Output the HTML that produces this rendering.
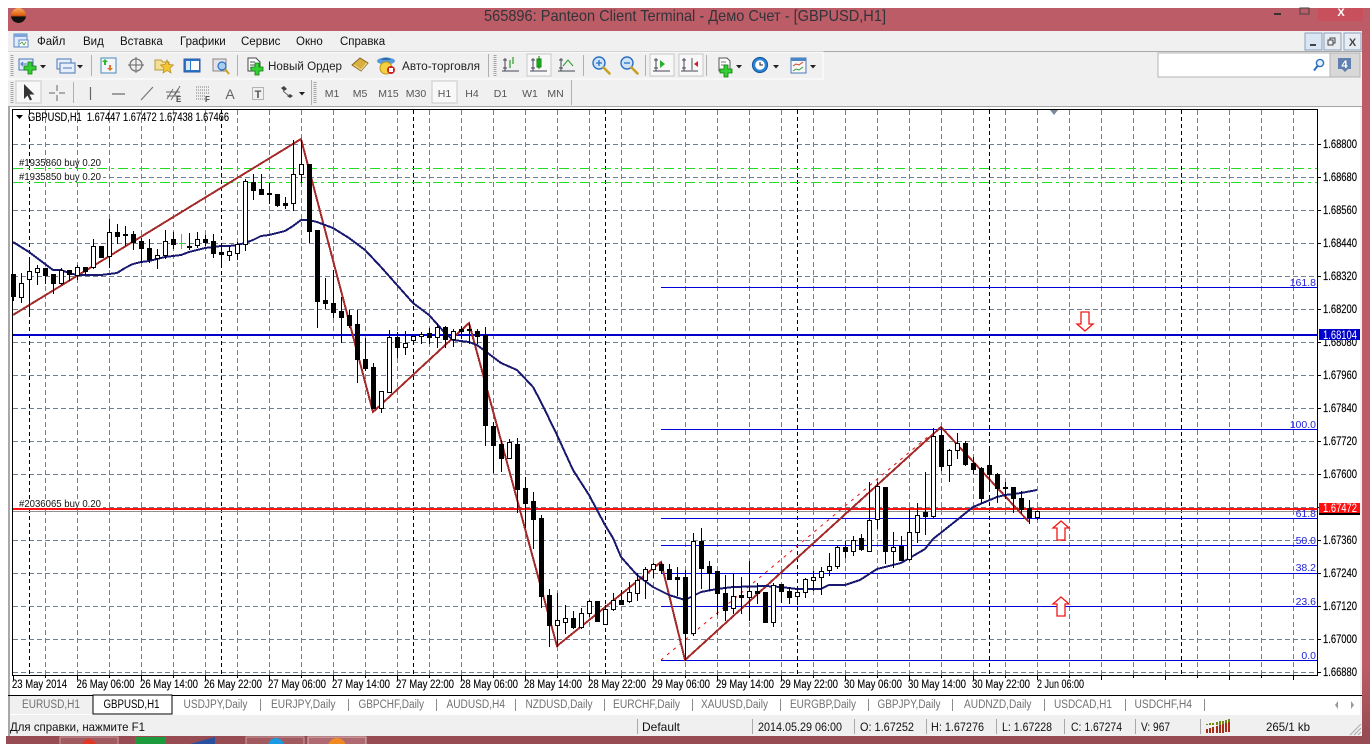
<!DOCTYPE html>
<html><head><meta charset="utf-8"><title>Panteon Client Terminal</title>
<style>
html,body{margin:0;padding:0;background:#fff;width:1370px;height:744px;overflow:hidden}
svg{display:block;font-family:"Liberation Sans","Noto Sans CJK SC",sans-serif}
text{white-space:pre}
.m{font-size:11.5px;fill:#111}
.tf{font-size:10.5px;fill:#555;text-anchor:middle}
.ax{font-size:11.5px;fill:#000;stroke:#000;stroke-width:.15px}
.dt{font-size:11.5px;fill:#000;stroke:#000;stroke-width:.12px}
.tb{font-size:11.5px;fill:#707070}
.st{font-size:12px;fill:#111}
.fb{font-size:10.5px;fill:#2222dd;text-anchor:end}
.or{font-size:10.5px;fill:#111}
.c{shape-rendering:crispEdges}
</style></head><body>
<svg width="1370" height="744" viewBox="0 0 1370 744" xmlns="http://www.w3.org/2000/svg">
<defs>
<linearGradient id="rs" x1="0" y1="0" x2="0" y2="1"><stop offset="0" stop-color="#bc5c66"/><stop offset=".9" stop-color="#bc5c66"/><stop offset="1" stop-color="#974b52"/></linearGradient>
<linearGradient id="ball" x1="0" y1="0" x2="0" y2="1"><stop offset="0" stop-color="#f6b060"/><stop offset=".5" stop-color="#e05a10"/><stop offset=".6" stop-color="#111"/><stop offset="1" stop-color="#111"/></linearGradient>
<g id="pl"><path d="M-2-6h4v4h4v4h-4v4h-4v-4h-4v-4h4z" fill="#35d035" stroke="#0c7c0c" stroke-width=".8"/></g>
<path id="dd" d="M0 0h6l-3 3.5z" fill="#222"/>
<g id="lens"><circle cx="0" cy="0" r="6" fill="#cfe3fa" stroke="#2a6fc0" stroke-width="1.4"/><path d="M4.5 4.5l6 6" stroke="#c9a020" stroke-width="2.6" stroke-linecap="round"/></g>
<g id="axes"><path d="M-6-7v13M-9 6H8M-8-5h4M-8 3h4" stroke="#445" stroke-width="1" fill="none"/></g>
</defs>

<rect x="8" y="8" width="1362" height="23" fill="#bc5c66"/>
<rect x="1362" y="31" width="8" height="705" fill="url(#rs)"/>
<rect x="6" y="736" width="1364" height="8" fill="#974b52"/>
<rect x="8" y="31" width="1354" height="705" fill="#f0f0f0"/>

<!-- title bar -->
<circle cx="18.5" cy="15.5" r="7.5" fill="url(#ball)"/>
<text x="484" y="21" font-size="16" fill="#33333a" textLength="402" lengthAdjust="spacingAndGlyphs">565896: Panteon Client Terminal - Демо Счет - [GBPUSD,H1]</text>
<rect x="1274" y="13" width="7" height="2" fill="#333"/>
<rect x="1300" y="8" width="9" height="6" fill="none" stroke="#444"/>
<rect x="1318" y="8" width="45" height="13" fill="#c8505c"/>
<text x="1341" y="16" font-size="11" font-weight="bold" fill="#fff" text-anchor="middle">X</text>

<!-- menu bar -->
<g class="c"><rect x="14" y="34" width="13" height="13" fill="#dfeafa" stroke="#5a86c6"/><rect x="14" y="34" width="13" height="3" fill="#7ea4dc"/><rect x="19" y="40" width="9" height="7" fill="#fff" stroke="#5a86c6"/></g>
<path d="M20 44l2-2 2 3 2-3" fill="none" stroke="#3a9a3a" stroke-width=".8"/>
<text class="m" x="37" y="45">Файл</text>
<text class="m" x="83" y="45">Вид</text>
<text class="m" x="120" y="45">Вставка</text>
<text class="m" x="180" y="45">Графики</text>
<text class="m" x="241" y="45">Сервис</text>
<text class="m" x="296" y="45">Окно</text>
<text class="m" x="340" y="45">Справка</text>
<g class="c">
<rect x="1305" y="33" width="17" height="17" fill="#dbe6f4" stroke="#8aa0bc"/><rect x="1310" y="44" width="6" height="2" fill="#444"/>
<rect x="1324" y="33" width="17" height="17" fill="#e8edf3" stroke="#8aa0bc"/><rect x="1330" y="38" width="5" height="5" fill="none" stroke="#444"/><rect x="1328" y="40" width="5" height="5" fill="#e8edf3" stroke="#444"/>
<rect x="1344" y="33" width="17" height="17" fill="#e8edf3" stroke="#8aa0bc"/>
</g>
<text x="1352.5" y="46" font-size="11" font-weight="bold" fill="#444" text-anchor="middle">X</text>
<rect class="c" x="8" y="51" width="1354" height="1" fill="#a8a8a8"/>

<!-- toolbars bg -->
<rect class="c" x="8" y="52" width="815" height="27" fill="#f0f0f0" stroke="#fff"/>
<rect class="c" x="1158" y="53" width="172" height="24" fill="#fff" stroke="#b4b4b4"/>
<rect class="c" x="1330" y="53" width="30" height="24" fill="#d8d8d8" stroke="#b4b4b4"/>
<path d="M1338 58h13v11h-3l-3 3-3-3h-4z" fill="#6080b0"/>
<text x="1344.5" y="68" font-size="11" font-weight="bold" fill="#fff" text-anchor="middle">4</text>
<circle cx="1320" cy="63" r="3.6" fill="#e8f2ff" stroke="#2a6fc0" stroke-width="1.4"/><path d="M1317.5 66l-3.5 4.5" stroke="#2a6fc0" stroke-width="2"/>
<path d="M12 55v22M12 82v21M495 55v22M315 82v21" stroke="#a4a4a4" stroke-width="3" stroke-dasharray="1 1"/>
<g class="c" fill="#b0b0b0">
<rect x="91" y="55" width="1" height="21"/><rect x="237" y="55" width="1" height="21"/><rect x="488" y="54" width="1" height="23"/><rect x="583" y="55" width="1" height="21"/><rect x="645" y="55" width="1" height="21"/><rect x="706" y="55" width="1" height="21"/>
<rect x="73" y="82" width="1" height="21"/><rect x="311" y="80" width="1" height="25"/><rect x="571" y="80" width="1" height="25"/>
</g>

<!-- Toolbar 1 icons -->
<rect class="c" x="19" y="59" width="14" height="11" fill="#dfeafa" stroke="#4a76b6"/><path d="M21 64h6M23 62l-2 2 2 2M27 66h4" stroke="#4a76b6" fill="none"/><use href="#pl" x="30" y="68"/>
<use href="#dd" x="40" y="65"/>
<rect class="c" x="57" y="59" width="14" height="10" fill="#e6effb" stroke="#4a76b6"/><rect class="c" x="60" y="63" width="15" height="10" fill="#e6effb" stroke="#4a76b6"/><path d="M63 68h9" stroke="#4a76b6"/>
<use href="#dd" x="77" y="65"/>
<rect class="c" x="101" y="58" width="15" height="15" fill="#f2f6fb" stroke="#4a88bc" stroke-width="1"/><path d="M105 59l3 3h-2v3h-2v-3h-2z" fill="#2eb82e"/><path d="M110 71l-3-3h2v-3h2v3h2z" fill="#e2742a"/>
<circle cx="136" cy="65" r="6" fill="none" stroke="#777" stroke-width="1.3"/><path d="M136 57v16M128 65h16" stroke="#666"/>
<path d="M155 60h6l2 2h6v8h-14z" fill="#f5df95" stroke="#b49a3c"/><path d="M167 60l2 4.500 4.500.5-3.500 3 1 5-4-2.500-4 2.500 1-5-3.500-3 4.500-.5z" fill="#f5c431" stroke="#b48a1c" stroke-width=".7"/>
<rect class="c" x="184" y="59" width="16" height="13" fill="#2a76c8" stroke="#2a5aa8"/><rect class="c" x="186" y="61" width="4" height="9" fill="#dde8f6"/><rect class="c" x="191" y="61" width="8" height="9" fill="#fff"/>
<rect class="c" x="213" y="59" width="13" height="12" fill="#e2e2e8" stroke="#888"/><circle cx="222" cy="66" r="4" fill="#a8cdf0" stroke="#2a6fc0" stroke-width="1.2"/><path d="M225 69l4 5" stroke="#c9a020" stroke-width="2"/>
<path d="M248 58h8l4 4v9h-12z" fill="#fff" stroke="#444"/><path d="M250 62h5M250 65h7M250 68h4" stroke="#555"/><use href="#pl" x="257" y="69"/>
<text x="268" y="70" font-size="11.5" fill="#222" textLength="74" lengthAdjust="spacingAndGlyphs">Новый Ордер</text>
<path d="M352 65l8-7 8 5-7 8z" fill="#d9b040" stroke="#8a6420"/><path d="M354 65l7 5 6-7" fill="none" stroke="#f4e09a"/>
<ellipse cx="386" cy="61" rx="9" ry="3.5" fill="#5a9ad6"/><path d="M381 60q5-5 10 0z" fill="#2a6ab0"/><circle cx="386" cy="68" r="6" fill="#f5d040" stroke="#c09818"/><circle cx="391" cy="70" r="4" fill="#d02020"/><rect class="c" x="389" y="68" width="4" height="4" fill="#fff"/>
<text x="402" y="70" font-size="11.5" fill="#222" textLength="78" lengthAdjust="spacingAndGlyphs">Авто-торговля</text>

<use href="#axes" x="511" y="65"/><path d="M510 60v8M513 57v7" stroke="#2a9a2a" stroke-width="1.2"/>
<rect class="c" x="527" y="54" width="24" height="22" fill="#f8f8f8" stroke="#c8c8c8"/><use href="#axes" x="539" y="65"/><rect class="c" x="537" y="59" width="4" height="8" fill="#2ad02a" stroke="#0c7c0c"/><path d="M539 56v13" stroke="#0c7c0c"/>
<use href="#axes" x="567" y="65"/><path d="M563 66l5-6 5 6" fill="none" stroke="#2a9a2a"/>
<use href="#lens" x="599" y="63"/><path d="M596 63h6M599 60v6" stroke="#2a6fc0" stroke-width="1.3"/>
<use href="#lens" x="627" y="63"/><path d="M624 63h6" stroke="#2a6fc0" stroke-width="1.3"/>
<rect class="c" x="650" y="54" width="24" height="22" fill="#f8f8f8" stroke="#c8c8c8"/><use href="#axes" x="662" y="65"/><path d="M660 60l5 4-5 4z" fill="#2ab02a"/>
<rect class="c" x="679" y="54" width="24" height="22" fill="#f8f8f8" stroke="#c8c8c8"/><use href="#axes" x="690" y="65"/><path d="M692 58v12" stroke="#555"/><path d="M698 61l-4 3 4 3z" fill="#d02020"/>
<path d="M719 58h8l3 3v10h-11z" fill="#fff" stroke="#555"/><path d="M721 62h5M721 65h6" stroke="#777"/><use href="#pl" x="726" y="71"/>
<use href="#dd" x="736" y="65"/>
<circle cx="760" cy="65" r="7.500" fill="#2a86d8" stroke="#1a5aa0" stroke-width="1.2"/><circle cx="760" cy="65" r="4.800" fill="#fff"/><path d="M760 62v3h3" stroke="#222" fill="none"/>
<use href="#dd" x="773" y="65"/>
<rect class="c" x="791" y="58" width="15" height="15" fill="#f8f8f8" stroke="#4a76b6"/><rect class="c" x="791" y="58" width="15" height="3" fill="#4a86c6"/><path d="M793 66l3-2 3 1 4-3" fill="none" stroke="#d04020"/><path d="M793 71l3-2 3 1 4-3" fill="none" stroke="#30a030"/>
<use href="#dd" x="810" y="65"/>

<!-- Toolbar 2 icons -->
<rect class="c" x="16" y="81" width="25" height="22" fill="#f8f8f8" stroke="#c8c8c8"/>
<path d="M24 84v15l3.500-3.500 2.500 5 2-1-2.500-5h5z" fill="#333"/>
<path d="M57 85v6M57 95v6M49 93h6M59 93h6" stroke="#666" stroke-width="1"/>
<path d="M90.500 87v13" stroke="#666" stroke-width="1.2"/>
<path d="M112 94h13" stroke="#666" stroke-width="1.2"/>
<path d="M141 100l12-13" stroke="#777" stroke-width="1.2"/>
<path d="M167 99l6-10M171 100l7-11M166 92h14M167 96h13M175 95l5-9" stroke="#666" stroke-width=".9" fill="none"/>
<text x="176" y="102" font-size="8" font-weight="bold" fill="#444">E</text>
<path d="M196 87h13M196 90h13M196 93h13M196 96h9M196 99h9" stroke="#777" stroke-dasharray="1 1"/>
<text x="205" y="102" font-size="8" font-weight="bold" fill="#444">F</text>
<text x="230" y="99" font-size="14" fill="#666" text-anchor="middle">A</text>
<rect x="252.500" y="87.500" width="11" height="12" fill="none" stroke="#777" stroke-dasharray="1 1"/><text x="258" y="98" font-size="11" font-weight="bold" fill="#555" text-anchor="middle">T</text>
<path d="M281 88l3-2 3 3-3 2zM287 96l3-2 3 2-3 2z" fill="#444"/><path d="M283 91l6 5" stroke="#666"/>
<use href="#dd" x="299" y="92"/>
<rect class="c" x="432" y="81" width="25" height="22" fill="#f8f8f8" stroke="#c8c8c8"/>
<text class="tf" x="332" y="97">M1</text><text class="tf" x="360" y="97">M5</text><text class="tf" x="388.500" y="97">M15</text><text class="tf" x="416" y="97">M30</text><text class="tf" x="444.500" y="97">H1</text><text class="tf" x="472" y="97">H4</text><text class="tf" x="500.500" y="97">D1</text><text class="tf" x="530" y="97">W1</text><text class="tf" x="555.500" y="97">MN</text>
<rect class="c" x="8" y="106" width="1354" height="1" fill="#a4a4a4"/>

<!-- chart -->
<rect class="c" x="10" y="107" width="1350" height="588" fill="#fff"/>
<rect class="c" x="8" y="107" width="2" height="629" fill="#a8a8a8"/>
<g id="grid" class="c" stroke="#708090" stroke-width="1" stroke-dasharray="5 3"></g>
<g id="dates" class="c" stroke="#000" stroke-width="1" stroke-dasharray="4 3"></g>

<!-- green order lines -->
<g class="c" stroke="#22dd22" stroke-width="1" stroke-dasharray="10 4 3 4">
<path d="M13 168.500H1317M13 182.500H1317"/>
</g>
<!-- fibo -->
<g class="c" stroke="#0000d8" stroke-width="1"><path d="M661 287.500H1317M661 429.500H1317M661 518.500H1317M661 545.500H1317M661 573.500H1317M661 606.500H1317M661 660.500H1317"/></g>
<!-- horizontal -->
<rect class="c" x="13" y="334" width="1304" height="2" fill="#0000c8"/>
<rect class="c" x="13" y="511" width="1304" height="1" fill="#909090"/>
<rect class="c" x="13" y="508" width="1304" height="2" fill="#ff1010"/>

<path d="M661 660L930 435" stroke="#e01010" stroke-width="1" stroke-dasharray="3 5" fill="none"/>
<polyline class="c" points="13,315 301,139 373,412 469,323 557,646 661,562 685,660 941,427 1029,522" fill="none" stroke="#a52a2a" stroke-width="2"/>
<polyline class="c" points="13,242 21,247 29,252 37,258 45,264 53,270 61,270 69,273 77,275 85,275 93,275 101,275 109,274 117,273 125,268 133,264 141,262 149,261 157,259 165,257 173,256 181,255 189,252 197,250 205,248 213,247 221,246 229,246 237,245 245,243 253,240 261,236 269,235 277,233 285,231 293,226 301,220 309,220 317,222 325,225 333,228 349,238 365,250 381,267 397,285 413,303 429,315 445,333 453,340 469,342 477,345 493,357 501,363 517,370 533,387 541,402 557,435 573,470 589,495 597,510 605,525 613,538 621,557 637,575 653,587 669,595 685,600 701,592 717,589 733,587 765,586 781,587 797,589 821,589 829,585 845,585 860,580 877,569 901,563 925,549 933,539 957,520 973,507 997,497 1005,495 1021,493 1037,490" fill="none" stroke="#191970" stroke-width="2"/>
<g id="cd" class="c"></g>

<!-- arrows -->
<path d="M1061 521l8 7h-4v12h-8v-12h-4z" fill="#fff" stroke="#f01818" stroke-width="1.300"/>
<path d="M1061 597l8 7h-4v12h-8v-12h-4z" fill="#fff" stroke="#f01818" stroke-width="1.300"/>
<path d="M1085 331l8-7h-4v-12h-8v12h-4z" fill="#fff" stroke="#f01818" stroke-width="1.300"/>

<rect class="c" x="13" y="172" width="90" height="9" fill="#fff"/>
<rect class="c" x="13" y="499" width="90" height="9" fill="#fff"/>
<text class="or" x="19" y="166" textLength="82" lengthAdjust="spacingAndGlyphs">#1935860 buy 0.20</text>
<text class="or" x="19" y="180" textLength="82" lengthAdjust="spacingAndGlyphs">#1935850 buy 0.20</text>
<text class="or" x="19" y="507" textLength="82" lengthAdjust="spacingAndGlyphs">#2036065 buy 0.20</text>
<text class="fb" x="1316" y="286">161.8</text>
<text class="fb" x="1316" y="428">100.0</text>
<text class="fb" x="1316" y="517">61.8</text>
<text class="fb" x="1316" y="544">50.0</text>
<text class="fb" x="1316" y="571">38.2</text>
<text class="fb" x="1316" y="605">23.6</text>
<text class="fb" x="1316" y="659">0.0</text>

<!-- frame -->
<g class="c" fill="#000">
<rect x="12" y="109" width="1306" height="1"/><rect x="12" y="109" width="1" height="567"/><rect x="1317" y="109" width="1" height="567"/><rect x="12" y="675" width="1306" height="1"/>
</g>
<path d="M1050 110h8l-4 5z" fill="#7a8a9a"/>
<path d="M16 115h7l-3.500 4z" fill="#000"/>
<text x="28" y="121" font-size="11.5" fill="#000" stroke="#000" stroke-width=".12" textLength="201" lengthAdjust="spacingAndGlyphs">GBPUSD,H1  1.67447 1.67472 1.67438 1.67466</text>
<g id="ticks" class="c" stroke="#000" stroke-width="1"></g>

<!-- right axis -->
<text class="ax" x="1323" y="148" textLength="34" lengthAdjust="spacingAndGlyphs">1.68800</text>
<text class="ax" x="1323" y="181" textLength="34" lengthAdjust="spacingAndGlyphs">1.68680</text>
<text class="ax" x="1323" y="214" textLength="34" lengthAdjust="spacingAndGlyphs">1.68560</text>
<text class="ax" x="1323" y="247" textLength="34" lengthAdjust="spacingAndGlyphs">1.68440</text>
<text class="ax" x="1323" y="280" textLength="34" lengthAdjust="spacingAndGlyphs">1.68320</text>
<text class="ax" x="1323" y="313" textLength="34" lengthAdjust="spacingAndGlyphs">1.68200</text>
<text class="ax" x="1323" y="346" textLength="34" lengthAdjust="spacingAndGlyphs">1.68080</text>
<text class="ax" x="1323" y="379" textLength="34" lengthAdjust="spacingAndGlyphs">1.67960</text>
<text class="ax" x="1323" y="412" textLength="34" lengthAdjust="spacingAndGlyphs">1.67840</text>
<text class="ax" x="1323" y="445" textLength="34" lengthAdjust="spacingAndGlyphs">1.67720</text>
<text class="ax" x="1323" y="478" textLength="34" lengthAdjust="spacingAndGlyphs">1.67600</text>
<text class="ax" x="1323" y="544" textLength="34" lengthAdjust="spacingAndGlyphs">1.67360</text>
<text class="ax" x="1323" y="577" textLength="34" lengthAdjust="spacingAndGlyphs">1.67240</text>
<text class="ax" x="1323" y="610" textLength="34" lengthAdjust="spacingAndGlyphs">1.67120</text>
<text class="ax" x="1323" y="643" textLength="34" lengthAdjust="spacingAndGlyphs">1.67000</text>
<text class="ax" x="1323" y="676" textLength="34" lengthAdjust="spacingAndGlyphs">1.66880</text>
<rect class="c" x="1319" y="329" width="41" height="11" fill="#0000c8"/>
<text x="1323" y="339" font-size="11.5" fill="#fff" textLength="34" lengthAdjust="spacingAndGlyphs">1.68104</text>
<rect class="c" x="1319" y="503" width="41" height="12" fill="#000"/>
<rect class="c" x="1319" y="503" width="41" height="10" fill="#ff1010"/>
<text x="1323" y="512" font-size="11.5" fill="#fff" textLength="34" lengthAdjust="spacingAndGlyphs">1.67472</text>

<!-- date axis -->
<text class="dt" x="12" y="688" textLength="55" lengthAdjust="spacingAndGlyphs">23 May 2014</text>
<text class="dt" x="76.500" y="688" textLength="58" lengthAdjust="spacingAndGlyphs">26 May 06:00</text>
<text class="dt" x="140" y="688" textLength="58" lengthAdjust="spacingAndGlyphs">26 May 14:00</text>
<text class="dt" x="204" y="688" textLength="58" lengthAdjust="spacingAndGlyphs">26 May 22:00</text>
<text class="dt" x="268" y="688" textLength="58" lengthAdjust="spacingAndGlyphs">27 May 06:00</text>
<text class="dt" x="332" y="688" textLength="58" lengthAdjust="spacingAndGlyphs">27 May 14:00</text>
<text class="dt" x="396" y="688" textLength="58" lengthAdjust="spacingAndGlyphs">27 May 22:00</text>
<text class="dt" x="460" y="688" textLength="58" lengthAdjust="spacingAndGlyphs">28 May 06:00</text>
<text class="dt" x="524" y="688" textLength="58" lengthAdjust="spacingAndGlyphs">28 May 14:00</text>
<text class="dt" x="588" y="688" textLength="58" lengthAdjust="spacingAndGlyphs">28 May 22:00</text>
<text class="dt" x="652" y="688" textLength="58" lengthAdjust="spacingAndGlyphs">29 May 06:00</text>
<text class="dt" x="716" y="688" textLength="58" lengthAdjust="spacingAndGlyphs">29 May 14:00</text>
<text class="dt" x="780" y="688" textLength="58" lengthAdjust="spacingAndGlyphs">29 May 22:00</text>
<text class="dt" x="844" y="688" textLength="58" lengthAdjust="spacingAndGlyphs">30 May 06:00</text>
<text class="dt" x="908" y="688" textLength="58" lengthAdjust="spacingAndGlyphs">30 May 14:00</text>
<text class="dt" x="972" y="688" textLength="58" lengthAdjust="spacingAndGlyphs">30 May 22:00</text>
<text class="dt" x="1037" y="688" textLength="47" lengthAdjust="spacingAndGlyphs">2 Jun 06:00</text>

<!-- tabs -->
<rect class="c" x="8" y="695" width="1354" height="1" fill="#000"/>
<rect class="c" x="10" y="696" width="1350" height="19" fill="#fff"/>
<rect class="c" x="10" y="696" width="83" height="18" fill="#f0f0f0"/>
<rect class="c" x="93" y="695" width="79" height="19" fill="#fff" stroke="#000"/>
<g class="c" fill="#8a8a8a">
<rect x="260" y="699" width="1" height="12"/><rect x="348" y="699" width="1" height="12"/><rect x="436" y="699" width="1" height="12"/><rect x="515" y="699" width="1" height="12"/><rect x="604" y="699" width="1" height="12"/><rect x="692" y="699" width="1" height="12"/><rect x="780" y="699" width="1" height="12"/><rect x="868" y="699" width="1" height="12"/><rect x="952" y="699" width="1" height="12"/><rect x="1044" y="699" width="1" height="12"/><rect x="1125" y="699" width="1" height="12"/><rect x="1204" y="699" width="1" height="12"/>
</g>
<text class="tb" x="22" y="708" textLength="58" lengthAdjust="spacingAndGlyphs">EURUSD,H1</text>
<text class="tb" style="fill:#000" x="103.500" y="708" textLength="56" lengthAdjust="spacingAndGlyphs">GBPUSD,H1</text>
<text class="tb" x="183.500" y="708" textLength="64" lengthAdjust="spacingAndGlyphs">USDJPY,Daily</text>
<text class="tb" x="271" y="708" textLength="64.500" lengthAdjust="spacingAndGlyphs">EURJPY,Daily</text>
<text class="tb" x="358.500" y="708" textLength="65.500" lengthAdjust="spacingAndGlyphs">GBPCHF,Daily</text>
<text class="tb" x="446.500" y="708" textLength="58.500" lengthAdjust="spacingAndGlyphs">AUDUSD,H4</text>
<text class="tb" x="525.500" y="708" textLength="67" lengthAdjust="spacingAndGlyphs">NZDUSD,Daily</text>
<text class="tb" x="613" y="708" textLength="67" lengthAdjust="spacingAndGlyphs">EURCHF,Daily</text>
<text class="tb" x="701" y="708" textLength="67" lengthAdjust="spacingAndGlyphs">XAUUSD,Daily</text>
<text class="tb" x="790" y="708" textLength="66" lengthAdjust="spacingAndGlyphs">EURGBP,Daily</text>
<text class="tb" x="877.500" y="708" textLength="63" lengthAdjust="spacingAndGlyphs">GBPJPY,Daily</text>
<text class="tb" x="964" y="708" textLength="67.500" lengthAdjust="spacingAndGlyphs">AUDNZD,Daily</text>
<text class="tb" x="1054" y="708" textLength="58" lengthAdjust="spacingAndGlyphs">USDCAD,H1</text>
<text class="tb" x="1134.500" y="708" textLength="57.500" lengthAdjust="spacingAndGlyphs">USDCHF,H4</text>
<path d="M1338 701l-3 4 3 4zM1351 701l3 4-3 4z" fill="#999"/>

<!-- status bar -->
<text class="st" x="10" y="731" textLength="135" lengthAdjust="spacingAndGlyphs">Для справки, нажмите F1</text>
<text class="st" x="642" y="731" textLength="38" lengthAdjust="spacingAndGlyphs">Default</text>
<text class="st" x="758" y="731" textLength="84" lengthAdjust="spacingAndGlyphs">2014.05.29 06:00</text>
<text class="st" x="860" y="731" textLength="54" lengthAdjust="spacingAndGlyphs">O: 1.67252</text>
<text class="st" x="931" y="731" textLength="53" lengthAdjust="spacingAndGlyphs">H: 1.67276</text>
<text class="st" x="1002" y="731" textLength="50" lengthAdjust="spacingAndGlyphs">L: 1.67228</text>
<text class="st" x="1071" y="731" textLength="51" lengthAdjust="spacingAndGlyphs">C: 1.67274</text>
<text class="st" x="1141" y="731" textLength="29" lengthAdjust="spacingAndGlyphs">V: 967</text>
<text class="st" x="1266" y="731" textLength="44" lengthAdjust="spacingAndGlyphs">265/1 kb</text>
<g class="c" fill="#a8a8a8">
<rect x="637" y="719" width="1" height="15"/><rect x="752" y="719" width="1" height="15"/><rect x="854" y="719" width="1" height="15"/><rect x="926" y="719" width="1" height="15"/><rect x="996" y="719" width="1" height="15"/><rect x="1064" y="719" width="1" height="15"/><rect x="1135" y="719" width="1" height="15"/><rect x="1200" y="719" width="1" height="15"/>
</g>
<g id="conn" class="c"></g>
<path d="M1350 735l11-11M1354 735l7-7M1358 735l3-3" stroke="#aaa" stroke-width="1"/>

<!-- taskbar peek -->
<g class="c"><rect x="60" y="737" width="58" height="8" fill="#a05a60" stroke="#c8a0a4"/><rect x="135" y="737" width="31" height="8" fill="#1c9a3c"/><rect x="246" y="737" width="58" height="8" fill="#a05a60" stroke="#c8a0a4"/><rect x="308" y="737" width="58" height="8" fill="#ae6a70" stroke="#d8b8bc"/></g>
<circle cx="89" cy="746" r="7" fill="#e03828"/>
<path d="M190 744l25-7v7z" fill="#2a50a0"/>
<circle cx="276" cy="746" r="8" fill="#1a9ae0"/>
<circle cx="337" cy="747" r="9" fill="#f08a20"/>
</svg>
<script>
(function(){
var C=[[274,300,274,296,1],[273,302,283,297,0],[259,312,271,279,0],[265,284,268,272,0],[268,283,268,275,1],[274,293,274,283,1],[268,284,270,283,0],[270,280,270,274,1],[265,279,267,275,0],[267,274,267,271,1],[239,268,246,267,0],[246,257,246,257,1],[219,267,232,256,0],[224,243,232,236,1],[226,245,234,235,1],[231,249,234,242,1],[238,262,241,248,1],[239,262,248,259,1],[249,268,255,258,0],[230,258,241,255,0],[232,248,239,244,1],[234,248,243,243,2],[233,249,246,247,1],[232,247,239,245,0],[235,245,239,242,1],[234,257,241,253,1],[243,263,252,254,1],[247,260,251,255,0],[242,259,244,253,0],[179,250,181,244,0],[174,199,182,190,1],[174,194,189,194,1],[183,203,193,194,1],[194,206,194,205,1],[197,208,203,205,1],[140,210,174,203,0],[140,182,164,174,0],[164,242,164,231,1],[230,327,230,301,1],[278,308,300,303,1],[270,317,303,312,1],[297,342,311,317,1],[310,327,315,325,1],[310,382,324,359,1],[338,370,359,368,1],[363,408,367,408,1],[391,412,391,408,0],[330,392,337,392,0],[332,357,337,347,1],[331,354,343,347,0],[335,343,336,340,0],[332,343,334,336,0],[328,343,333,337,1],[323,347,327,337,0],[326,347,327,339,1],[329,346,331,339,0],[326,338,329,331,1],[323,343,329,330,1],[329,343,331,336,1],[327,445,335,425,1],[422,472,426,445,1],[440,471,444,458,1],[439,458,442,458,0],[438,512,444,489,1],[477,527,488,503,1],[492,548,501,519,1],[515,607,518,596,1],[589,646,595,625,1],[593,646,620,625,0],[605,633,618,622,0],[611,628,618,627,1],[608,628,613,627,0],[600,616,601,613,0],[601,621,601,621,1],[605,624,609,624,0],[593,610,600,609,0],[590,604,600,604,1],[582,602,592,601,0],[573,600,580,593,0],[567,598,569,580,0],[563,577,564,569,0],[562,573,564,570,1],[564,579,569,579,1],[567,595,577,579,1],[570,660,577,633,1],[533,635,541,633,0],[528,588,541,568,1],[561,590,566,573,1],[571,614,571,593,1],[575,620,593,610,1],[573,613,596,608,0],[577,613,595,597,1],[561,620,591,597,0],[583,603,591,593,1],[592,622,592,622,1],[583,626,585,622,0],[584,602,584,591,1],[587,603,591,597,1],[588,604,592,596,0],[578,597,579,592,0],[571,590,577,580,0],[567,594,571,577,0],[553,575,566,570,0],[546,568,547,566,0],[541,557,547,551,1],[536,555,540,551,0],[534,550,538,549,1],[482,551,520,551,0],[482,528,486,519,0],[487,563,487,551,1],[532,567,547,551,0],[536,560,546,560,1],[509,560,532,559,0],[503,542,515,532,0],[472,534,512,516,1],[428,517,436,516,0],[427,470,435,466,1],[449,481,450,465,0],[433,458,443,450,0],[441,465,443,464,1],[457,473,463,469,1],[467,503,468,498,1],[449,489,465,474,1],[473,502,474,488,1],[482,498,487,488,1],[487,512,487,498,1],[491,513,498,509,1],[500,523,508,517,1],[511,519,511,517,0]];
var s='';
C.forEach(function(c,i){
var x=13+8*i,col=c[4]==2?'#18e018':'#000';
s+='<rect x="'+x+'" y="'+c[0]+'" width="1" height="'+(c[1]-c[0]+1)+'" fill="'+col+'"/>';
if(c[4]==1){s+='<rect x="'+(x-2)+'" y="'+c[2]+'" width="5" height="'+(Math.max(c[3]-c[2],1)+1)+'" fill="#000"/>';}
else if(c[4]==0){s+='<rect x="'+(x-2)+'" y="'+c[2]+'" width="5" height="'+(Math.max(c[3]-c[2],2)+1)+'" fill="#000"/><rect x="'+(x-1)+'" y="'+(c[2]+1)+'" width="3" height="'+(Math.max(c[3]-c[2],2)-1)+'" fill="#fff"/>';}
else{s+='<rect x="'+(x-2)+'" y="'+c[2]+'" width="5" height="1" fill="'+col+'"/>';}
});
document.getElementById('cd').innerHTML=s;
var g='',x,y;
for(x=45;x<=1293;x+=32){ if((x-29)%192)g+='<path d="M'+(x+.5)+' 110V675"/>';}
for(y=144;y<=672;y+=33){g+='<path d="M13 '+(y+.5)+'H1317"/>';}
document.getElementById('grid').innerHTML=g;
var d='';
for(x=29;x<=1181;x+=192){d+='<path d="M'+(x+.5)+' 110V675"/>';}
document.getElementById('dates').innerHTML=d;
var t='';
for(y=144;y<=672;y+=33){t+='<path d="M1318 '+(y+.5)+'H1321"/>';}
for(x=13;x<=1293;x+=32){t+='<path d="M'+(x+.5)+' 676V'+((x-13)%64?678:680)+'"/>';}
document.getElementById('ticks').innerHTML=t;
var n='';
for(var i=0;i<8;i++){var xx=1206+3.2*i,top=729-i*.9;
n+='<rect x="'+xx.toFixed(0)+'" y="'+(top-5+i*.2).toFixed(0)+'" width="2" height="'+(729-top+5-i*.2-4).toFixed(0)+'" fill="#6f8a14"/>';
n+='<rect x="'+xx.toFixed(0)+'" y="'+(top-.5).toFixed(0)+'" width="2" height="'+(733-top).toFixed(0)+'" fill="#a82c18"/>';}
document.getElementById('conn').innerHTML=n;
})();
</script>
</body></html>
